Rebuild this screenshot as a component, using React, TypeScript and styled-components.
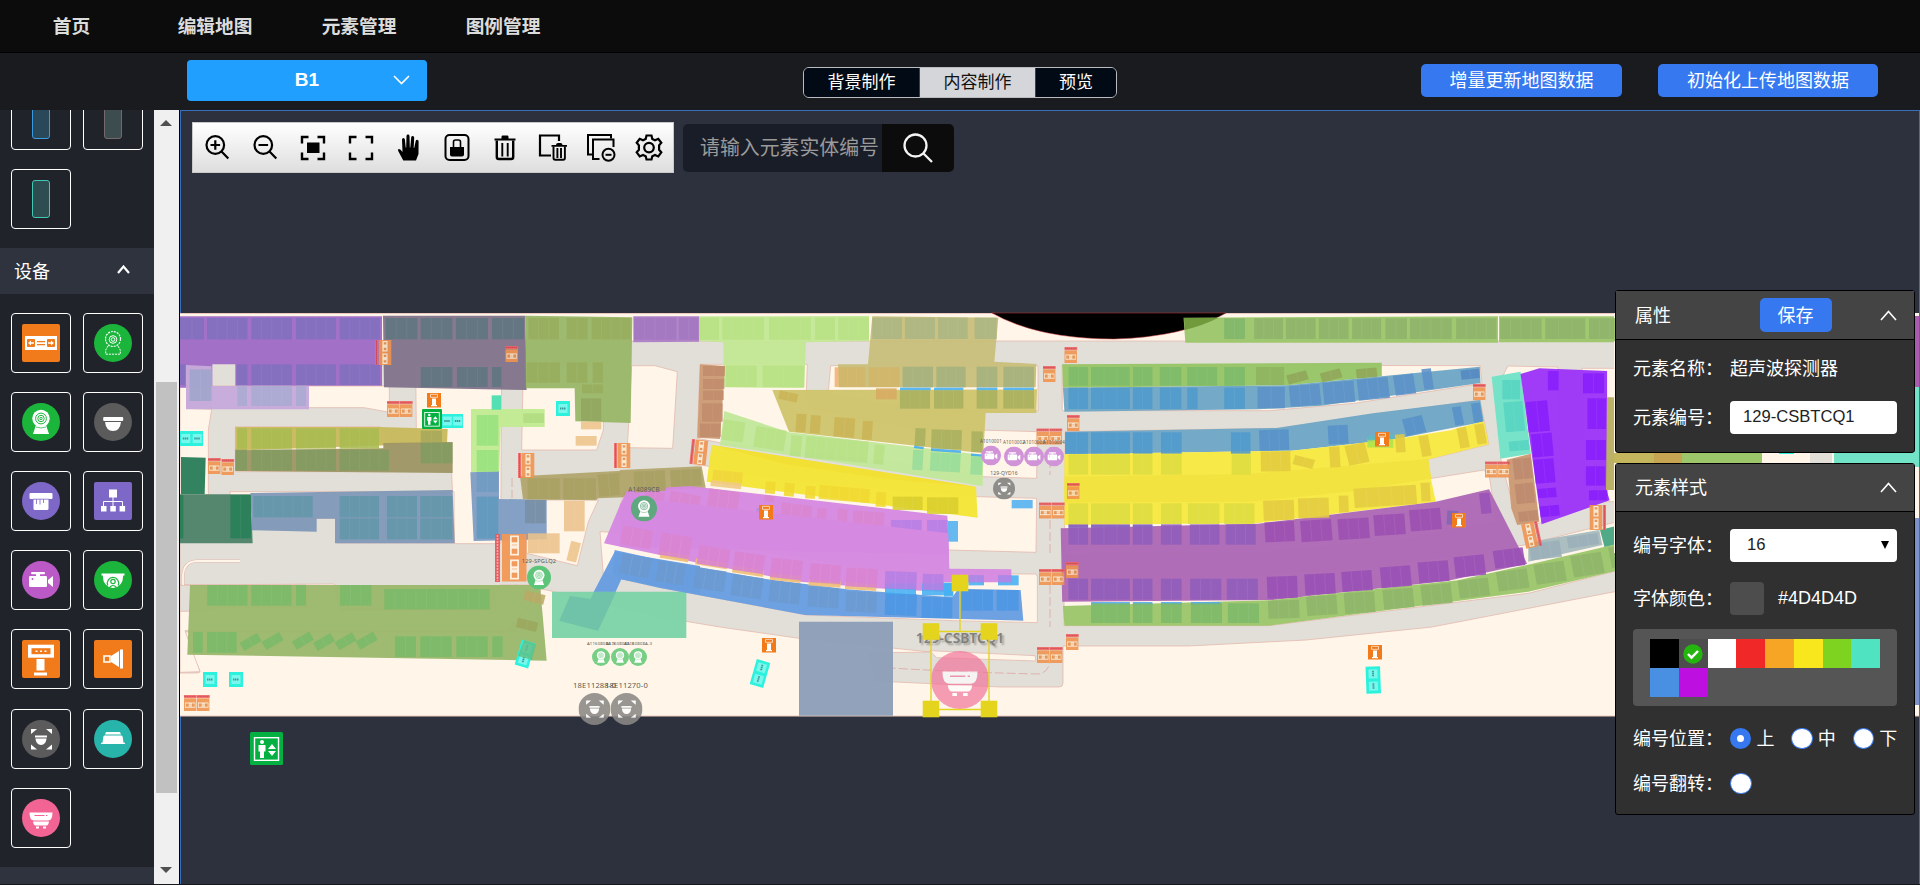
import React from 'react';
import styled, { createGlobalStyle } from 'styled-components';

const GlobalStyle = createGlobalStyle`
  * { box-sizing: border-box; }
  body {
    margin: 0;
    background: #17181c;
    overflow: hidden;
    font-family: "Liberation Sans", "Noto Sans CJK SC", sans-serif;
  }
  svg { display: block; }
`;

/* ---------- page frame ---------- */
const Page = styled.div`
  display: flex;
  flex-direction: column;
  width: 1920px;
  height: 885px;
  color: #fff;
`;
const TopNav = styled.nav`
  display: flex;
  height: 53px;
  flex: none;
  align-items: center;
  background: #0c0c0c;
  border-bottom: 1px solid #000;
`;
const NavItem = styled.a<{ $width: number }>`
  width: ${p => p.$width}px;
  padding-top: 1px;
  text-align: center;
  color: #dcdcdc;
  font-size: 18.7px;
  font-weight: 700;
  line-height: 52px;
`;
const SubBar = styled.header`
  display: flex;
  flex: none;
  height: 57px;
  background: #1a1b1f;
`;
const FloorSelect = styled.button`
  display: flex;
  align-items: center;
  justify-content: center;
  position: relative;
  width: 240px;
  height: 41px;
  margin: 7px 376px 0 187px;
  padding: 0 0 1px;
  border: 0;
  border-radius: 4px;
  background: #219fff;
  color: #fff;
  font: 700 19px "Liberation Sans", sans-serif;
  svg { position: absolute; right: 17px; top: 15px; }
`;
const Segments = styled.div`
  display: flex;
  width: 314px;
  height: 31px;
  margin-top: 14px;
  border: 1px solid #b9bbc0;
  border-radius: 6px;
  overflow: hidden;
`;
const Segment = styled.button<{ $active?: boolean; $width: number }>`
  width: ${p => p.$width}px;
  padding: 0 0 4px;
  border: 0;
  border-right: 1px solid #3b3f49;
  background: ${p => (p.$active ? '#d5d6da' : '#020a15')};
  color: ${p => (p.$active ? '#111' : '#fff')};
  font: 17px/25px "Noto Sans CJK SC", sans-serif;
  &:last-child { border-right: 0; }
`;
const Actions = styled.div`
  display: flex;
  gap: 36px;
  margin: 11px 0 0 304px;
`;
const PrimaryButton = styled.button<{ $width: number; $height: number }>`
  width: ${p => p.$width}px;
  height: ${p => p.$height}px;
  padding: 0 0 3px;
  border: 0;
  border-radius: 5px;
  background: #3678ef;
  color: #fff;
  font: 18px/1 "Noto Sans CJK SC", sans-serif;
`;
const Main = styled.main`
  display: flex;
  height: 774px;
  flex: none;
`;

/* ---------- sidebar ---------- */
const Sidebar = styled.aside`
  width: 154px;
  overflow: hidden;
  background: #20232a;
`;
const TileGrid = styled.div<{ $pull?: number }>`
  display: grid;
  grid-template-columns: 60px 60px;
  grid-auto-rows: 60px;
  gap: 19.1px 12px;
  margin-top: ${p => (p.$pull ? -p.$pull : 0)}px;
  padding: ${p => (p.$pull ? 0 : 19)}px 0 19px 11px;
`;
const Tile = styled.div`
  display: grid;
  place-items: center;
  border: 1px solid #fff;
  border-radius: 4px;
`;
const Bar = styled.div<{ $stroke: string; $fill: string }>`
  width: 18px;
  height: 38px;
  border: 1px solid ${p => p.$stroke};
  border-radius: 3px;
  background: ${p => p.$fill};
`;
const SectionHead = styled.div`
  display: flex;
  align-items: center;
  justify-content: space-between;
  height: 46px;
  padding: 0 24px 3px 14px;
  background: #2f333e;
  font-size: 18px;
`;
const ScrollTrack = styled.div`
  display: flex;
  flex-direction: column;
  align-items: center;
  width: 26px;
  padding: 10px 1px 7px 0;
  background: #f0f0f0;
  border-right: 1px solid #000;
`;
const ScrollThumb = styled.div`
  width: 21px;
  height: 411px;
  margin: 256px 0 74px;
  background: #c1c1c1;
`;
const Arrow = styled.div<{ $down?: boolean }>`
  border: 6px solid transparent;
  border-top-width: ${p => (p.$down ? 6 : 0)}px;
  border-bottom-width: ${p => (p.$down ? 0 : 6)}px;
  border-top-color: #505050;
  border-bottom-color: #505050;
`;

/* ---------- canvas ---------- */
const Canvas = styled.section`
  position: relative;
  flex: 1;
  border: 1px solid #3a6fbc;
  border-bottom: 0;
  background: #2c313d;
`;
const MapSvg = styled.svg`
  position: absolute;
  top: 0;
  left: -1px;
`;
const Tools = styled.div`
  position: relative;
  display: flex;
  gap: 9px;
  padding: 11px 0 0 11px;
`;
const Toolbar = styled.div`
  display: flex;
  align-items: center;
  width: 482px;
  height: 51px;
  border: 1px solid #c9c9c9;
  background: linear-gradient(#fff, #dedede);
`;
const ToolButton = styled.button`
  display: grid;
  place-items: center;
  width: 48px;
  height: 48px;
  padding: 0;
  border: 0;
  background: none;
  color: #000;
`;
const Search = styled.div`
  display: flex;
  width: 271px;
  height: 48px;
  margin-top: 2px;
  border-radius: 5px;
  overflow: hidden;
`;
const SearchInput = styled.input`
  width: 199px;
  padding: 0 0 3px 17px;
  border: 0;
  background: #191d27;
  font: 19.9px "Noto Sans CJK SC", sans-serif;
  &::placeholder { color: #9a9a9a; opacity: 1; }
`;
const SearchButton = styled.button`
  display: grid;
  place-items: center;
  width: 72px;
  padding: 0;
  border: 0;
  background: #0c0c0c;
`;

/* ---------- property panels ---------- */
const PanelColumn = styled.div`
  position: absolute;
  top: 179px;
  right: 4px;
  display: flex;
  flex-direction: column;
  gap: 10px;
  width: 300px;
`;
const Panel = styled.div<{ $height: number }>`
  height: ${p => p.$height}px;
  border: 1px solid #000;
  border-radius: 3px;
  background: #303030;
`;
const PanelHead = styled.div<{ $height: number }>`
  display: flex;
  align-items: center;
  justify-content: space-between;
  height: ${p => p.$height}px;
  padding: 0 17px 0 19px;
  border-bottom: 1px solid #000;
  background: #444;
  font-size: 18px;
  button { margin-left: 40px; }
`;
const PanelTitle = styled.span`
  padding-bottom: 3px;
`;
const Row = styled.div<{ $top: number; $height: number }>`
  display: flex;
  align-items: center;
  height: ${p => p.$height}px;
  margin: ${p => p.$top}px 0 0 17px;
  font-size: 18px;
  white-space: nowrap;
`;
const Label = styled.span`
  width: 97px;
  flex: none;
  padding-bottom: 3px;
`;
const Value = styled.span`
  padding-bottom: 3px;
`;
const Field = styled.div<{ $pad: number }>`
  display: flex;
  align-items: center;
  justify-content: space-between;
  width: 167px;
  height: 33px;
  padding: 0 8px 1px ${p => p.$pad}px;
  border-radius: 4px;
  background: #fff;
  color: #222;
  font-size: 16.6px;
`;
const Chip = styled.span`
  width: 34px;
  height: 33px;
  margin-right: 14px;
  border-radius: 4px;
  background: #4d4d4d;
`;
const Palette = styled.div`
  display: flex;
  flex-wrap: wrap;
  align-content: flex-start;
  width: 264px;
  height: 77px;
  margin: 14px 0 0 17px;
  padding: 10px 17px;
  border-radius: 4px;
  background: #555;
`;
const Swatch = styled.span<{ $color: string }>`
  display: grid;
  place-items: center;
  width: 28.75px;
  height: 29px;
  background: ${p => p.$color};
`;
const Radio = styled.span<{ $on?: boolean }>`
  width: 21.5px;
  height: 21.5px;
  border: ${p => (p.$on ? 7 : 1)}px solid #3678ef;
  border-radius: 50%;
  background: #fff;
`;
const RadioText = styled.span`
  width: 40px;
  padding: 0 0 3px 5px;
`;

/* ---------- device glyphs, drawn on a 38 x 38 field ---------- */
type Kind = 'gate' | 'camDash' | 'cam' | 'dome' | 'reader' | 'tree' | 'video' | 'dome2' | 'kiosk' | 'speaker' | 'scan' | 'lamp' | 'sonic';

const glyphColor: Record<Kind, string> = {
  gate: '#f17b1b', camDash: '#1bb53c', cam: '#1bb53c', dome: '#5b5b5b', reader: '#7d68c8', tree: '#7d68c8',
  video: '#bb59c6', dome2: '#1bb53c', kiosk: '#f17b1b', speaker: '#f17b1b', scan: '#5b5b5b', lamp: '#27b5ab', sonic: '#f26493',
};
const squareKinds: Kind[] = ['gate', 'tree', 'kiosk', 'speaker'];

function glyphShapes(kind: Kind, c: string) {
  switch (kind) {
    case 'gate':
      return <><path d="M3 12h32v14H3z" /><g fill={c}><rect x="5" y="15" width="8" height="8" rx="1" /><rect x="25" y="15" width="8" height="8" rx="1" /><path d="M15 17h8v1.2h-8zM15 20h8v1.2h-8z" /></g><path d="M6 19l3-2.6v1.8h3v1.6H9v1.8zM32 19l-3-2.6v1.8h-3v1.6h3v1.8z" /></>;
    case 'camDash':
      return <g fill="none" stroke="#fff"><circle cx="19" cy="15" r="7.5" strokeDasharray="2 1" strokeWidth="1.2" /><circle cx="19" cy="15.5" r="3.8" /><circle cx="19" cy="15.5" r="1.8" /><path d="M14 22l-2.3 4v4.2h14.6V26L24 22" strokeDasharray="2 1" /></g>;
    case 'cam':
      return <><path d="M14 22h10l3 9H11z" /><circle cx="19" cy="15.5" r="8.7" /><g fill="none" stroke={c}><circle cx="19" cy="15.5" r="5.4" /><circle cx="19" cy="15.5" r="3.2" /><circle cx="19" cy="15.5" r="1.2" /><path d="M14 24q5 2 10 0" strokeWidth=".7" /></g></>;
    case 'dome':
      return <><rect x="9.2" y="14" width="20" height="4" rx="1" /><path d="M11 19h16q-1 9-8 9t-8-9z" /></>;
    case 'reader':
      return <><rect x="7.5" y="11" width="23" height="6" rx="1" /><path d="M11.500 17h15v9.500q0 1.500-1.500 1.500H13q-1.500 0-1.500-1.500z" /><path d="M11 17.200h16M14.500 17v5M18 17v5.500M21.500 17v4" stroke={c} strokeWidth=".8" /></>;
    case 'tree':
      return <><rect x="15" y="7.500" width="8" height="8" /><path d="M19 15v9M9.500 24v-4.500h19V24" fill="none" stroke="#fff" /><path d="M7 24h5.500v5.500H7zM16.300 24h5.500v5.500h-5.500zM25.600 24h5.500v5.500h-5.500z" /></>;
    case 'video':
      return <><rect x="9" y="11" width="14" height="2.300" rx="1" /><path d="M14 13h4v2h-4z" /><rect x="7" y="15" width="18" height="11" rx="1.300" /><path d="M26 19l5-4v11l-5-4z" /><circle cx="10.500" cy="18" r="1" fill={c} /></>;
    case 'dome2':
      return <><path d="M7.500 12.500h23v2h-1.300q-.2 11.500-10.200 12.500-10-1-10.200-12.500H7.500z" /><g fill="none" stroke={c} strokeWidth="1.200"><circle cx="19" cy="20.500" r="2.200" /><path d="M13.800 24.500a5.700 5.700 0 1 1 10.400 0M15.500 26.500q3.500-4 7 0" /></g></>;
    case 'kiosk':
      return <><path d="M6 4.700h26v13H6z" /><path d="M9.500 8.200h19v6h-19z" fill={c} /><path d="M13.500 10.500h2v1.500h-2zM18 10.500h2v1.500h-2zM22.500 10.500h2v1.500h-2zM14.500 19h8v11.500h-8zM12 32.500h13v3H12z" /></>;
    case 'speaker':
      return <><path d="M26 9.500h3v19h-3zM25 11v16l-8-5v-6z" /><path d="M10 16h6v6h-6z" fill="none" stroke="#fff" strokeWidth="1.600" /></>;
    case 'scan':
      return <><path d="M9 9h6l-6 5zM30 9h-6l6 5zM9 29.500h6l-6-5zM30 29.500h-6l6-5z" /><rect x="13" y="15.500" width="12" height="2" /><path d="M13.500 18.500h11q-.5 6.500-5.500 6.500t-5.500-6.500z" /></>;
    case 'lamp':
      return <><path d="M12 12h14l1 2.600H11zM10.500 15.500h17q1 0 1.200 1.500l.8 5.800H31V24H7v-1.200h1.500l.8-5.800q.2-1.500 1.200-1.500z" /></>;
    case 'sonic':
      return <><path d="M7.500 13.500h23q0 8-4.500 8H12q-4.500 0-4.500-8z" /><path d="M11 22.500h16q-.5 4-2.500 4H13.500q-2 0-2.500-4z" /><path d="M14 27.500h3v2h-3zM21 27.500h3v2h-3z" /><path d="M12.500 16.500h10M24 16.500h1.500" stroke={c} /></>;
  }
}

function Glyph({ kind, x = 0, y = 0, size = 38, color, opacity }: { kind: Kind; x?: number; y?: number; size?: number; color?: string; opacity?: number }) {
  const c = color ?? glyphColor[kind];
  return (
    <svg x={x} y={y} width={size} height={size} viewBox="0 0 38 38" fill="#fff" opacity={opacity}>
      {squareKinds.includes(kind) ? <rect width="38" height="38" rx="2" fill={c} /> : <circle cx="19" cy="19" r="19" fill={c} />}
      {glyphShapes(kind, c)}
    </svg>
  );
}

/* ---------- map data ---------- */
type Zone = [string, string];
type BayRow = [string, number, number, [number, number][]];
type TiltBay = [string, number, number, number, number, number];
interface Sector {
  transform: string;
  islands: string[];
  zones: Zone[];
  rows: BayRow[];
  tilted: TiltBay[];
}

const west: Sector = {
  transform: 'translate(180 305) scale(.33333)',
  islands: [
    '97,243 628,243 628,322 553,308 95,308', '0,182 20,182 20,310 95,313 85,375 85,570 0,570',
    '707,182 965,182 962,716 824,716 815,505 812,480 718,478 710,470', '166,365 600,365 628,410 628,500 166,500',
    '150,560 822,560 822,714 470,714 470,640 150,640', '1030,182 1272,182 1270,375 1250,435 1025,435',
    '1040,585 1255,585 1225,650 1192,782 1040,745',
  ],
  zones: [
    ['#a06cc6', '0,34 606,34 606,242 166,242 166,178 97,178 97,248 0,248'],
    ['#c6a9da', '18,180 95,184 95,243 387,243 387,313 18,313'],
    ['#83758c', '609,32 1036,32 1040,255 612,247'],
    ['#9bb86a', '1036,32 1357,37 1352,354 1186,349 1184,250 1038,250'],
    ['#c8ba5e', '166,366 600,366 803,372 801,415 166,436'],
    ['#9f9766', '166,436 610,430 610,414 818,411 818,504 166,498'],
    ['#c2ea92', '873,312 1094,312 1094,366 962,366 958,502 873,502'],
    ['#2c7f5b', '3,456 77,458 74,568 3,568'],
    ['#51846b', '0,568 212,568 218,715 0,715'],
    ['#8199b8', '211,564 818,555 824,715 465,715 465,641 410,641 410,680 216,676'],
    ['#829ec4', '871,502 957,499 957,582 1100,584 1100,703 881,708'],
    ['#b3a770', '1020,514 1380,494 1380,575 1254,580 1248,586 1029,583'],
  ],
  rows: [
    ['#806fbd', 39, 64, [[0, 72], [81, 121], [214, 122], [348, 120], [479, 121]]],
    ['#806fbd', 178, 62, [[0, 15], [170, 32], [214, 122], [348, 120], [479, 121]]],
    ['#9fa5cc', 193, 95, [[29, 65]]],
    ['#a9abd1', 242, 61, [[172, 29], [214, 122], [348, 30]]],
    ['#60757f', 39, 64, [[617, 95], [722, 95], [828, 96], [936, 96]]],
    ['#60757f', 186, 60, [[722, 95], [831, 92], [936, 28]]],
    ['#98ad5e', 39, 64, [[1045, 92], [1160, 63], [1235, 117]]],
    ['#98ad5e', 172, 61, [[1040, 100], [1160, 62], [1238, 31]]],
    ['#98ad5e', 238, 27, [[1206, 63]]],
    ['#92a660', 280, 68, [[1203, 61]]],
    ['#eec48a', 350, 23, [[1203, 61]]],
    ['#eec48a', 393, 29, [[1187, 63]]],
    ['#a7bb50', 370, 61, [[172, 29], [214, 122], [348, 120], [479, 118]]],
    ['#819b60', 434, 63, [[166, 35], [214, 122], [348, 120], [479, 148]]],
    ['#a7a85a', 377, 34, [[722, 64]]],
    ['#819b60', 413, 62, [[722, 95]]],
    ['#98e180', 330, 92, [[890, 65]]],
    ['#98e180', 435, 65, [[890, 65]]],
    ['#6f9bc0', 502, 59, [[890, 65]]],
    ['#5f99bd', 575, 126, [[890, 65]]],
    ['#7990a5', 585, 70, [[1035, 62]]],
    ['#3eddac', 271, 43, [[935, 28]]],
    ['#b0dc82', 325, 29, [[1030, 62]]],
    ['#277f58', 570, 130, [[151, 62], [0, 10]]],
    ['#6296a9', 573, 64, [[220, 178], [479, 118], [621, 90], [721, 96]]],
    ['#6296a9', 640, 63, [[479, 118], [621, 90], [721, 96]]],
    ['#a89f63', 520, 63, [[1043, 96], [1150, 98]]],
    ['#ecc38b', 587, 92, [[1152, 62]]],
    ['#ecc38b', 685, 60, [[1044, 95]]],
  ],
  tilted: [['#a89f63', 1255, 505, 96, 66, -5], ['#eec48a', 1166, 710, 30, 60, 14]],
};

const south: Sector = {
  transform: 'translate(180 540) scale(.33333)',
  islands: ['0,135 460,132 466,135 482,210 930,210 960,135 1085,135 1080,160 990,262 975,272 15,272 60,395 0,397 0,214 82,213 98,203 380,203 380,135 0,135'],
  zones: [
    ['#9cb86c', '30,135 1080,135 1100,362 22,344'],
    ['#689ddf', '1304,35 1560,78 1560,163 1324,118 1254,272 1138,242 1170,168 1230,177'],
    ['#7ed3a8', '1116,155 1519,155 1519,294 1116,294'],
    ['#6fc1a8', '1170,168 1232,177 1242,156 1308,156 1254,272 1138,242'],
  ],
  rows: [
    ['#7ab968', 135, 62, [[82, 120], [214, 120], [348, 30], [480, 94]]],
    ['#7ab968', 147, 61, [[613, 316]]],
    ['#7ab968', 276, 62, [[39, 29], [81, 89]]],
    ['#7ab968', 289, 62, [[645, 63], [721, 94], [829, 94], [937, 31]]],
  ],
  tilted: [
    ['#7ab968', 182, 292, 60, 28, -30], ['#7ab968', 248, 289, 60, 28, -30], ['#7ab968', 339, 288, 60, 28, -30], ['#7ab968', 402, 292, 60, 28, -30],
    ['#7ab968', 467, 290, 60, 28, -30], ['#7ab968', 530, 288, 60, 28, -30], ['#9ba75c', 1010, 240, 62, 29, 14], ['#b9aa66', 1032, 158, 62, 29, 14],
  ],
};

const centre: Sector = {
  transform: 'translate(620 305) scale(.33333)',
  islands: [
    '35,182 105,182 172,200 158,430 22,428',
    '240,178 562,178 558,285 575,308 720,340 900,370 1252,380 1250,520 1090,515 800,470 310,415 232,400',
    '632,182 1254,182 1254,318 900,315 640,270 625,260',
    '245,480 480,525 1070,575 1250,580 1248,742 985,735 780,720 0,600 20,545',
  ],
  zones: [
    ['#ad80c6', '40,34 237,34 237,110 40,112'],
    ['#c4e896', '237,34 747,33 747,108 558,112 552,249 313,247 309,112 237,108'],
    ['#c9bf7c', '757,34 1135,38 1123,170 1249,177 1247,247 656,247 654,178 744,178'],
    ['#cfc46c', '457,255 1251,253 1249,324 1097,324 1090,445 507,380'],
    ['#cb9b75', '240,178 315,183 300,402 232,398'],
    ['#c1e79b', '313,318 507,382 1090,450 1088,544 640,470 300,420'],
    ['#b4a870', '0,495 245,484 257,548 20,560 0,573'],
    ['#f5e537', '275,420 1068,545 1073,638 260,530'],
    ['#f2df34', '275,420 1068,545 800,522 500,478'],
    ['#d689e0', '0,600 20,558 200,542 982,632 987,750 0,726'],
  ],
  rows: [
    ['#a278c0', 38, 66, [[42, 127], [177, 58]]],
    ['#b8e083', 38, 66, [[237, 60], [307, 125], [447, 125], [585, 60], [655, 92]]],
    ['#b8e083', 182, 64, [[318, 92], [428, 125]]],
    ['#abb583', 38, 64, [[757, 89], [855, 90], [954, 89], [1064, 66]]],
    ['#f1b071', 187, 59, [[644, 12]]],
    ['#d2b568', 187, 59, [[656, 80], [746, 92]]],
    ['#a4b17d', 185, 62, [[848, 91], [949, 88], [1070, 62], [1150, 92]]],
    ['#45aff3', 248, 8, [[840, 92], [942, 88], [1070, 62], [1150, 92]]],
    ['#a9b160', 256, 55, [[840, 90], [942, 88], [1070, 62], [1150, 92]]],
    ['#d8ab62', 250, 33, [[768, 62]]],
    ['#c28c6c', 183, 30, [[249, 65]]], ['#c28c6c', 222, 30, [[249, 64]]], ['#c28c6c', 257, 28, [[249, 62]]],
    ['#c28c6c', 295, 55, [[246, 62]]], ['#c28c6c', 356, 40, [[240, 62]]],
    ['#dace2f', 575, 40, [[818, 90]]],
    ['#dace2f', 577, 50, [[921, 94]]],
    ['#50aff0', 648, 62, [[984, 30]]],
    ['#b880e4', 645, 62, [[813, 92], [921, 62]]],
    ['#50aff0', 585, 25, [[1175, 63]]],
  ],
  tilted: [
    ['#cab557', 477, 262, 56, 25, 12], ['#cab557', 528, 327, 30, 54, 4], ['#cab557', 571, 331, 30, 54, 4], ['#cab557', 642, 338, 62, 58, 4], ['#cab557', 727, 348, 30, 56, 4],
    ['#a9b160', 885, 370, 31, 54, 3], ['#a9b160', 934, 374, 91, 58, 2], ['#a9b160', 1054, 379, 34, 62, 1],
    ['#41aaf0', 882, 424, 29, 7, 8], ['#41aaf0', 933, 433, 90, 8, 4], ['#41aaf0', 1053, 447, 36, 7, 4],
    ['#b7e086', 308, 348, 64, 60, 8], ['#b7e086', 404, 370, 92, 62, 9], ['#b7e086', 512, 392, 32, 62, 5], ['#b7e086', 556, 402, 188, 64, 5], ['#b7e086', 762, 420, 30, 58, 5],
    ['#98dc9b', 878, 435, 31, 60, 3], ['#98dc9b', 931, 444, 90, 56, 3], ['#98dc9b', 1052, 455, 35, 54, 3],
    ['#a89f63', 42, 498, 94, 62, -3], ['#a89f63', 152, 494, 92, 50, -3],
    ['#f0d63a', 278, 498, 90, 32, 6], ['#efc883', 272, 530, 92, 18, 6],
    ['#f0da32', 436, 530, 30, 36, 5], ['#f0da32', 493, 534, 30, 40, 5], ['#f0da32', 556, 543, 30, 38, 4], ['#f0da32', 597, 546, 152, 42, 5], ['#f0da32', 768, 561, 30, 44, 3],
    ['#da86d0', 75, 560, 58, 34, 8], ['#da86d0', 146, 565, 92, 64, 10], ['#da86d0', 263, 556, 92, 72, 8], ['#da86d0', 434, 572, 28, 18, 8], ['#da86d0', 482, 598, 92, 64, 7],
    ['#da86d0', 590, 610, 28, 58, 6], ['#da86d0', 651, 612, 30, 60, 6], ['#da86d0', 698, 620, 94, 60, 4], ['#b58bd9', 407, 612, 44, 36, 8],
  ],
};

const southCentre: Sector = {
  transform: 'translate(660 500) scale(.33333)',
  islands: ['-180,95 0,105 660,210 870,222 1128,222 1132,230 1132,368 880,362 440,345 0,262 -170,225', '810,452 1125,467 1128,483 830,473'],
  zones: [
    ['#d689e0', '-168,130 -120,15 -100,-10 865,100 868,206 1054,208 1054,247 852,247 852,276 650,265 420,245 120,190 0,165'],
    ['#689ee0', '-136,150 0,180 300,235 560,268 877,292 895,266 1082,270 1090,362 435,345 0,264 -116,238 -140,222'],
    ['#8e9fb8', '417,365 699,365 699,647 417,647'],
  ],
  rows: [
    ['#45aff3', 250, 36, [[675, 93], [786, 93]]],
    ['#45aff3', 248, 42, [[852, 28]]],
    ['#45aff3', 226, 30, [[925, 47], [1014, 62]]],
    ['#ba83e5', 225, 22, [[925, 47], [1014, 40]]],
    ['#4c96e2', 270, 62, [[905, 94], [1010, 66]]],
  ],
  tilted: [
    ['#edbd74', 0, 160, 86, 20, 9], ['#edbd74', 106, 182, 96, 18, 9], ['#edbd74', 217, 204, 94, 20, 9], ['#edbd74', 330, 224, 92, 20, 6], ['#edbd74', 446, 241, 96, 19, 4], ['#edbd74', 555, 250, 94, 20, 4],
    ['#da84d0', -115, 85, 90, 55, 10], ['#da84d0', 0, 105, 92, 66, 9], ['#da84d0', 114, 142, 94, 56, 9], ['#da84d0', 221, 160, 92, 56, 8], ['#da84d0', 332, 178, 94, 58, 6], ['#da84d0', 450, 193, 92, 56, 4], ['#da84d0', 558, 205, 94, 56, 3],
    ['#b67fe4', 675, 215, 95, 52, 2], ['#b67fe4', 788, 222, 62, 48, 1],
    ['#6b9acf', -118, 168, 90, 60, 11], ['#6b9acf', -10, 188, 84, 62, 9], ['#6b9acf', 102, 208, 94, 62, 8], ['#6b9acf', 215, 228, 92, 64, 8], ['#6b9acf', 328, 246, 92, 63, 6], ['#6b9acf', 444, 262, 92, 60, 4], ['#6b9acf', 558, 276, 92, 60, 3],
    ['#4c96e2', 675, 282, 95, 64, 2], ['#4c96e2', 785, 292, 92, 62, 1],
  ],
};

const east: Sector = {
  transform: 'translate(1040 305) scale(.3699 .33333)',
  islands: [
    '60,180 1190,182 1195,235 850,295 620,317 60,317', '68,380 640,370 1190,285 1213,418 1060,460 780,502 620,515 68,515',
    '68,592 580,590 830,560 1060,520 1200,495 1215,515 1233,650 1000,700 600,742 65,748',
    '65,815 560,813 950,780 1310,720 1568,648 1568,795 1320,865 620,962 65,962',
    '1265,183 1400,186 1408,600 1350,655 1290,650 1245,460 1250,215', '1465,190 1560,190 1560,590 1480,590',
  ],
  zones: [
    ['#9dc66b', '388,38 1238,34 1238,113 393,113'],
    ['#9dc66b', '1241,34 1568,34 1568,112 1241,112'],
    ['#98c567', '60,178 924,173 924,214 670,241 62,248'],
    ['#6fa7c6', '62,248 670,241 924,214 1189,185 1191,234 760,302 590,313 66,320'],
    ['#6fa7c6', '68,380 640,369 900,325 1190,285 1200,350 950,404 680,437 68,448'],
    ['#f7e842', '66,448 680,437 950,404 1110,376 1200,348 1213,418 1046,464 1070,590 590,654 66,660'],
    ['#f2e240', '66,515 560,507 800,485 1050,462 1058,520 830,560 560,590 66,592'],
    ['#ad69b6', '56,670 590,656 1070,590 1214,553 1317,776 1100,828 630,885 60,890'],
    ['#9dc66b', '62,903 620,886 1130,826 1317,780 1568,715 1568,795 1320,860 620,962 66,962'],
    ['#73e3c7', '1221,215 1299,200 1327,446 1245,461'],
    ['#9d36f8', '1299,207 1350,190 1533,198 1533,560 1540,586 1356,658'],
    ['#cb9a76', '1262,464 1327,446 1350,650 1290,660 1274,610'],
    ['#bab062', '1533,277 1568,277 1568,555 1530,555'],
    ['#a9bcbd', '1320,712 1512,675 1520,720 1320,770'],
    ['#4ba783', '1514,675 1568,660 1568,715 1526,726'],
  ],
  rows: [
    ['#7fb56a', 40, 62, [[498, 56]]],
    ['#8eb36a', 40, 62, [[579, 78], [665, 80], [754, 80], [844, 78], [934, 58], [1000, 113], [1125, 109], [1244, 112], [1366, 108], [1484, 84]]],
    ['#7cbb69', 186, 56, [[77, 53], [138, 105], [251, 53], [324, 58], [398, 81], [498, 56]]],
    ['#8fb460', 186, 54, [[584, 76]]],
    ['#4e9acb', 248, 64, [[77, 53], [138, 105], [251, 53], [324, 58], [398, 28], [498, 56]]],
    ['#5b91c7', 246, 64, [[588, 74]]],
    ['#4e9acb', 382, 64, [[68, 62], [138, 105], [251, 53], [327, 56], [516, 53]]],
    ['#dddc40', 448, 61, [[77, 53], [138, 105], [251, 53], [327, 56], [518, 52]]],
    ['#dddc40', 595, 62, [[77, 53], [138, 105], [251, 53], [327, 56], [400, 85], [498, 82]]],
    ['#4eaaf0', 660, 7, [[77, 53], [138, 105], [251, 53]]],
    ['#905db9', 658, 61, [[77, 53], [138, 105], [251, 53], [327, 56], [405, 80], [502, 81]]],
    ['#905db9', 821, 63, [[77, 53], [138, 105], [251, 53], [327, 56], [406, 84], [505, 84]]],
    ['#4eaaf0', 891, 9, [[138, 105], [251, 53], [327, 56], [408, 80]]],
    ['#7dba69', 895, 59, [[138, 105], [251, 53], [327, 56], [408, 84], [508, 84]]],
    ['#56d4c1', 225, 58, [[1250, 48]]],
    ['#871ffb', 205, 60, [[1468, 57]]], ['#871ffb', 280, 92, [[1480, 50]]], ['#871ffb', 405, 60, [[1476, 54]]], ['#871ffb', 484, 58, [[1476, 52]]], ['#871ffb', 556, 30, [[1484, 50]]],
    ['#871ffb', 198, 58, [[1373, 29]]],
  ],
  tilted: [
    ['#90a65a', 668, 203, 56, 28, -16], ['#90a65a', 759, 197, 56, 28, -16], ['#90a65a', 855, 190, 56, 28, -6],
    ['#5b91c7', 675, 240, 83, 62, -5], ['#5b91c7', 766, 230, 84, 64, -5], ['#5b91c7', 859, 220, 84, 63, -6], ['#5b91c7', 958, 209, 55, 60, -8], ['#5b91c7', 1035, 191, 26, 62, -8], ['#5489c2', 1138, 194, 50, 28, -6],
    ['#5791c7', 593, 374, 80, 62, -2], ['#5791c7', 779, 361, 54, 56, -3], ['#5791c7', 984, 336, 55, 52, -14], ['#5791c7', 1118, 305, 24, 55, -10], ['#5791c7', 1169, 294, 24, 58, -8],
    ['#e2cb3d', 597, 439, 80, 60, -1], ['#e2cb3d', 685, 457, 56, 28, 16], ['#e2cb3d', 783, 425, 28, 62, -3], ['#e2cb3d', 829, 417, 56, 60, -13], ['#e2cb3d', 961, 388, 26, 54, -4], ['#e2cb3d', 1028, 392, 26, 62, -10], ['#e2cb3d', 1131, 367, 26, 62, -10], ['#e2cb3d', 1178, 357, 26, 60, -9],
    ['#e4cc40', 604, 586, 83, 60, -2], ['#e4cc40', 698, 579, 83, 60, -2], ['#e4cc40', 808, 572, 26, 50, -2], ['#e4cc40', 849, 545, 169, 58, -4], ['#e4cc40', 1030, 533, 25, 56, -3],
    ['#9b50b0', 608, 650, 80, 60, -3], ['#9b50b0', 705, 645, 84, 64, -4], ['#9b50b0', 806, 640, 84, 62, -4], ['#9b50b0', 903, 628, 84, 62, -4], ['#9b50b0', 1000, 612, 84, 64, -5], ['#9853b6', 1190, 564, 28, 62, -6], ['#8165b3', 1100, 617, 30, 42, 3],
    ['#9850b5', 614, 814, 82, 66, -2], ['#9850b5', 716, 806, 82, 62, -3], ['#9850b5', 816, 798, 82, 60, -4], ['#9850b5', 921, 784, 82, 62, -5], ['#9850b5', 1023, 769, 82, 62, -5], ['#9850b5', 1121, 752, 82, 62, -6], ['#9850b5', 1227, 732, 82, 54, -8],
    ['#8eb46a', 617, 886, 84, 54, -2], ['#8eb46a', 721, 872, 82, 58, -4], ['#8eb46a', 823, 862, 82, 62, -4], ['#8eb46a', 928, 852, 82, 58, -5], ['#8eb46a', 1031, 838, 82, 60, -6], ['#8eb46a', 1132, 822, 82, 54, -7], ['#8eb46a', 1236, 796, 84, 58, -8], ['#8eb46a', 1338, 773, 82, 60, -9], ['#8eb46a', 1438, 747, 84, 64, -10], ['#8eb46a', 1541, 724, 40, 62, -10],
    ['#56d4c1', 1256, 290, 52, 90, -5], ['#56d4c1', 1268, 407, 54, 30, -6],
    ['#871ffb', 1317, 288, 58, 92, -5], ['#871ffb', 1330, 385, 56, 70, -5], ['#871ffb', 1337, 462, 54, 72, -5], ['#871ffb', 1346, 550, 50, 28, -5], ['#871ffb', 1352, 602, 52, 32, -6],
    ['#bd8a6e', 1280, 460, 50, 62, -6], ['#bd8a6e', 1286, 535, 50, 60, -6], ['#bd8a6e', 1294, 618, 52, 30, -6],
    ['#9aafba', 1324, 711, 84, 50, -8], ['#9aafba', 1426, 690, 84, 34, -9],
    ['#aee34c', 885, 402, 70, 26, 1], ['#5fb9c2', 885, 390, 70, 14, -4],
  ],
};

function Slots({ color, x, y, w, h }: { color: string; x: number; y: number; w: number; h: number }) {
  const count = Math.max(1, Math.round(w / 31));
  return (
    <>
      <rect x={x} y={y} width={w} height={h} fill={color} fillOpacity=".88" />
      {Array.from({ length: count - 1 }, (_, i) => (
        <path key={i} d={`M${x + ((i + 1) * w) / count} ${y + 1}v${h - 2}`} stroke="#fff" strokeOpacity=".12" strokeWidth="1.5" />
      ))}
    </>
  );
}

function SectorBase({ s }: { s: Sector }) {
  return (
    <g transform={s.transform}>
      {s.islands.map((p, i) => (
        <polygon key={i} points={p} fill="#fff6e9" stroke="#e3b9ae" vectorEffect="non-scaling-stroke" strokeWidth=".8" strokeLinejoin="round" />
      ))}
    </g>
  );
}
function SectorZones({ s }: { s: Sector }) {
  return (
    <g transform={s.transform}>
      {s.zones.map(([c, p], i) => <polygon key={i} points={p} fill={c} fillOpacity=".97" />)}
      {s.rows.map(([c, y, h, cells], i) => cells.map(([x, w]) => <Slots key={`${i}-${x}`} color={c} x={x} y={y} w={w} h={h} />))}
      {s.tilted.map(([c, x, y, w, h, a], i) => (
        <g key={i} transform={`rotate(${a} ${x + w / 2} ${y + h / 2})`}><Slots color={c} x={x} y={y} w={w} h={h} /></g>
      ))}
    </g>
  );
}

/* ---------- map markers ---------- */
const gates: [number, number][] = [
  [387, 401], [400, 401], [208, 458], [221.500, 459], [505.500, 346], [1043, 366], [1064.500, 347], [1067, 415], [1036.500, 428.500], [1049.500, 428.500],
  [1067, 483], [1039, 502.500], [1052, 502.500], [1039, 569], [1052, 569], [1066, 562], [1066, 634], [1037, 647], [1050, 647], [1473, 384], [1485, 461.500], [1497.500, 461.500], [184, 695], [197, 695],
];
const sideGates: [number, number, number, number][] = [
  [518, 453, 1, 0], [614, 443, 1, 0], [375, 340, 1, 0], [692, 439, 1, 6], [1537, 521, -1, -12], [1606, 505, -1, 0],
];
const kiosks: [number, number][] = [[427, 393], [759, 505], [762, 638], [1375, 432], [1452, 513], [1368, 645]];
const spots: [number, number, number, number, number][] = [
  [442, 414, 21, 14, 0], [556, 401, 14, 15, 0], [180, 431, 23, 15, 0], [203, 672, 14, 15, 0], [229, 672, 14, 15, 0],
  [518, 641, 14, 26, 16], [753, 660.500, 14, 26, 16], [1366, 666.500, 14.500, 27, -2],
];

function Gate({ x, y }: { x: number; y: number }) {
  return (
    <g transform={`translate(${x} ${y})`} opacity=".9">
      <rect width="12.700" height="3" fill="#ef6868" />
      <path d="M.5 1.400h11.600" stroke="#cf3c45" strokeWidth="1" strokeDasharray="1.400 .5" />
      <rect y="3.300" width="12.400" height="12.700" fill="#f09450" />
      <rect x="1" y="7.500" width="10.400" height="5.200" fill="#fbe9d2" />
      <path d="M2 8.700h2.500v2.800H2zM8 8.700h2.500v2.800H8zM5.200 9.300h2M5.200 11h2" fill="#e5924f" stroke="#e5924f" strokeWidth=".5" />
    </g>
  );
}
function SideGate({ x, y, flip, angle }: { x: number; y: number; flip: number; angle: number }) {
  return (
    <g transform={`translate(${x} ${y}) rotate(${angle}) scale(${flip} 1)`} opacity=".9">
      <rect width="3.200" height="25" fill="#ef6868" />
      <path d="M1.500 .5v24" stroke="#cf3c45" strokeDasharray="1.400 .5" />
      <rect x="3.800" width="12.500" height="25" fill="#f09450" />
      <path d="M7.500 1h5v10.500h-5zM7.500 13.500h5V24h-5z" fill="#fbe9d2" />
      <path d="M8.700 2.200h2.600v2.400H8.700zM8.700 7.800h2.600v2.400H8.700zM8.700 14.700h2.600v2.400H8.700zM8.700 20.200h2.600v2.400H8.700z" fill="#e5924f" />
    </g>
  );
}
function Kiosk({ x, y }: { x: number; y: number }) {
  return (
    <g transform={`translate(${x} ${y})`}>
      <rect width="14" height="14.500" fill="#f17b1b" />
      <path d="M3.500 1.300h7v3h-7z" fill="none" stroke="#f8dfc8" strokeWidth=".9" />
      <path d="M5 5.500h4V12h1v1.300H4V12h1z" fill="#fff" />
    </g>
  );
}
function Spot({ x, y, w, h, a }: { x: number; y: number; w: number; h: number; a: number }) {
  const across = w > h * 1.3;
  const down = h > w * 1.3;
  const cells = across ? [[x + w * 0.25, y + h / 2], [x + w * 0.75, y + h / 2]] : down ? [[x + w / 2, y + h * 0.27], [x + w / 2, y + h * 0.73]] : [[x + w / 2, y + h / 2]];
  return (
    <g transform={`rotate(${a} ${x + w / 2} ${y + h / 2})`}>
      <rect x={x} y={y} width={w} height={h} fill="#2cf2dd" />
      {cells.map(([cx, cy], i) => (
        <g key={i}><rect x={cx - 4.500} y={cy - 4.500} width="9" height="9" fill="#78f7ec" /><path d={down ? `M${cx} ${cy - 3}v6` : `M${cx - 3} ${cy}h6`} stroke="#3b9a9a" strokeWidth="1.800" strokeDasharray="1.500 .5" /></g>
      ))}
    </g>
  );
}
function Elevator({ x, y, size }: { x: number; y: number; size: number }) {
  return (
    <svg x={x} y={y} width={size} height={size} viewBox="0 0 33 33">
      <rect width="33" height="33" rx="1.500" fill="#03b041" />
      <rect x="4.500" y="5.700" width="24" height="22.600" fill="none" stroke="#fff" strokeWidth="1.400" />
      <circle cx="12" cy="10" r="2" fill="#fff" />
      <path d="M8.500 13h7v6.500h-1.500V26h-4v-6.500H8.500zM18 17l4-5 4 5zM18 19h8l-4 5z" fill="#fff" />
    </svg>
  );
}

const deviceMarks: { kind: Kind; cx: number; cy: number; r: number; color: string; label: string; ly: number; fs: number }[] = [
  { kind: 'cam', cx: 539, cy: 577.500, r: 12, color: '#5dc579', label: '129-SPGLQ2', ly: 563, fs: 5.700 },
  { kind: 'cam', cx: 644, cy: 508.500, r: 13, color: '#5ea77f', label: 'A14089CB', ly: 491.500, fs: 6.300 },
  { kind: 'video', cx: 991, cy: 455.500, r: 10, color: '#d193d8', label: 'A1010001', ly: 443, fs: 4.500 },
  { kind: 'video', cx: 1014, cy: 456.500, r: 10, color: '#d193d8', label: 'A1010002', ly: 444, fs: 4.500 },
  { kind: 'video', cx: 1034, cy: 456.500, r: 10, color: '#d193d8', label: 'A1010003', ly: 444, fs: 4.500 },
  { kind: 'video', cx: 1054, cy: 456.500, r: 10, color: '#d193d8', label: 'A1010004', ly: 444, fs: 4.500 },
  { kind: 'scan', cx: 1004, cy: 488.500, r: 11, color: '#8e8d8a', label: '129-QYD16', ly: 474.500, fs: 5 },
  { kind: 'cam', cx: 601, cy: 657, r: 9, color: '#76cf85', label: 'A1160808A-3', ly: 645, fs: 4.300 },
  { kind: 'cam', cx: 620, cy: 657, r: 9, color: '#76cf85', label: 'A1160808A-3', ly: 645, fs: 4.300 },
  { kind: 'cam', cx: 638, cy: 657, r: 9, color: '#76cf85', label: 'A1160808A-3', ly: 645, fs: 4.300 },
  { kind: 'scan', cx: 594.500, cy: 709, r: 16, color: '#8b8986', label: '18E11288-0', ly: 687.500, fs: 7.600 },
  { kind: 'scan', cx: 626.500, cy: 709, r: 16, color: '#8b8986', label: '18E11270-0', ly: 687.500, fs: 7.600 },
];

const handles: [number, number][] = [[960, 583], [931, 631.500], [989, 631.500], [931, 709], [989, 709]];

function FloorMap() {
  const sectors = [west, south, centre, southCentre, east];
  return (
    <MapSvg width="1739" height="773" viewBox="180 111 1739 773">
      <rect x="180" y="313" width="1739" height="403" fill="#fff6e9" />
      <path
        d="M180 341H1919V545L1750 590 1613 592 1432 627 1306 640 1188 646H1063V683Q1063 687 1059 687H1000L875 681 868 653 930 652 797 638 720 627 660 617 547 590 515 585V632H182L200 671Q200 673 197 673H180z"
        fill="#e2dfd8" stroke="#e3b9ae" strokeWidth=".8"
      />
      {sectors.map((s, i) => <SectorBase key={i} s={s} />)}
      <path d="M183 585V575Q184 561 198 561H240" fill="none" stroke="#e3b9ae" strokeWidth="3" />
      <path d="M183 585V575Q184 561 198 561H240" fill="none" stroke="#fff6e9" strokeWidth="1.800" />
      <path d="M512 478v20M1050 435v40M1050 520v35M1050 585v42M875 667Q950 672 1038 674Q1049 673 1050 660" fill="none" stroke="#dba6a1" strokeWidth=".8" strokeDasharray="9 3" />
      <path d="M180 313.500H1919M180 716H1919" stroke="#edc9bd" strokeWidth="1" />
      <path d="M992 313Q1038 339 1114 339Q1185 337 1226 313z" fill="#000" stroke="#c33" strokeWidth=".5" />
      {sectors.map((s, i) => <SectorZones key={i} s={s} />)}
      <path d="M1184 318H1218Q1204 325 1185 330z" fill="#709a3c" />
      <path d="M1614 313h305v240h-305z" fill="#fff6e9" />
      <path d="M1614 318h40v23h-40zM1682 453h80v10h-80z" fill="#9dc66b" />
      <path d="M1614 453h40v10h-40z" fill="#c3b65d" />
      <path d="M1654 453h28v10h-28z" fill="#c7a452" />
      <path d="M1810 453h22v10h-22z" fill="#e2dfd8" />
      <path d="M1834 453h85v14h-85z" fill="#73e3c7" />
      <path d="M1914 316h5v71h-5z" fill="#a95cae" />
      <path d="M1914 387h5v80h-5z" fill="#73e3c7" />
      <path d="M1914 518h5v187h-5z" fill="#7b91c7" />
      <path d="M1779 452h15v2h-15z" fill="#2cf2dd" />

      <g opacity=".95">
        <path d="M495 534h5v48h-5z" fill="#e65b60" />
        <path d="M497.500 535v46" stroke="#ffaaa0" strokeWidth="1.500" strokeDasharray="2 1" />
        <path d="M502 534h24.500v47.500H502z" fill="#f29857" />
        <path d="M510 535.500h9v20h-9zM510 559.500h9v20h-9z" fill="#fff1df" />
        <path d="M512 537.500h5v4.500h-5zM512 549h5v4.500h-5zM512 561.500h5v4.500h-5zM512 573h5v4.500h-5zM512 545h5M512 569h5" fill="#f29857" stroke="#f29857" strokeWidth=".6" />
      </g>
      {gates.map(([x, y]) => <Gate key={`${x}-${y}`} x={x} y={y} />)}
      {sideGates.map(([x, y, f, a]) => <SideGate key={`${x}-${y}`} x={x} y={y} flip={f} angle={a} />)}
      {spots.map(([x, y, w, h, a]) => <Spot key={`${x}-${y}`} x={x} y={y} w={w} h={h} a={a} />)}
      <polygon points="524,640 536,644 532,660 518,656" fill="#62be83" opacity=".8" />
      {kiosks.map(([x, y]) => <Kiosk key={`${x}-${y}`} x={x} y={y} />)}
      <Elevator x={422} y={409} size={20} />
      <Elevator x={250} y={732} size={33} />

      {deviceMarks.map(d => (
        <g key={`${d.cx}-${d.cy}`}>
          <Glyph kind={d.kind} x={d.cx - d.r} y={d.cy - d.r} size={d.r * 2} color={d.color} opacity={d.r === 16 ? 0.88 : 1} />
          <text x={d.cx} y={d.ly} fontSize={d.fs} fontFamily="Noto Sans" textAnchor="middle" fill="#5c5c55" letterSpacing=".15">{d.label}</text>
        </g>
      ))}

      <g opacity=".68"><Glyph kind="sonic" x={931} y={651} size={58} color="#f27299" /></g>
      <text x="960" y="643" fontSize="13.800" fontWeight="600" fontFamily="Noto Sans" textAnchor="middle" fill="#80807c" style={{ textShadow: '2px 2px 2px rgba(0,0,0,.3)' }}>129-CSBTCQ1</text>
      <path d="M960 583V631M931 631.500H989V709.500H931z" fill="none" stroke="#e4d422" strokeWidth="1.400" />
      {handles.map(([x, y]) => <rect key={`${x}-${y}`} x={x - 8.300} y={y - 8.300} width="16.600" height="16.600" fill="#e4d41e" />)}
    </MapSvg>
  );
}

/* ---------- toolbar glyphs, drawn on a 28 x 28 field ---------- */
const padlock = <><rect x="2.500" y="1" width="23" height="25" rx="4" fill="none" stroke="#000" strokeWidth="2" /><path d="M7 13h14v7.500q0 2-2 2H9q-2 0-2-2z" /><path d="M10.500 13V8q0-2 2-2h3q2 0 2 2v5" fill="none" stroke="#000" strokeWidth="1.600" /></>;
const zoomPlus = <g fill="none" stroke="#000" strokeWidth="2.200"><circle cx="12.300" cy="11" r="8.800" /><path d="M18.500 17.500l6.800 7M7.500 11h9.600M12.300 6.200v9.600" /></g>;
const zoomMinus = <g fill="none" stroke="#000" strokeWidth="2.200"><circle cx="12.300" cy="11" r="8.800" /><path d="M18.500 17.500l6.800 7M7.500 11h9.600" /></g>;
const corners = <path d="M3 9.500V3h6.500M18.500 3H25v6.500M25 18.500V25h-6.500M9.500 25H3v-6.500" fill="none" stroke="#000" strokeWidth="2.400" />;
const fit = <>{corners}<path d="M8 8.500h12.500v10.500H8z" /></>;
const hand = <path d="M8.300 26.500L3.200 17q-.8-1.800.8-1.900 1.400 0 3.500 3L7 5.500q.1-1.500 1.400-1.500t1.500 1.500l.8 8h.5L11.500 2Q11.700.6 13 .6T14.500 2l.3 11.500h.5L16.200 3.300Q16.500 1.900 17.800 2T19.200 3.600l-.5 10.400h.5l1.500-7q.5-1.400 1.800-1.100t1.100 1.700L23.500 20l-2.500 6.500z" />;
const bin = <><path d="M3.500 4.500h7V2.800q0-1.300 1.300-1.300h4.400q1.300 0 1.300 1.300v1.700h7v2h-21z" /><path d="M5.800 6.500V23q0 2 2 2h12.400q2 0 2-2V6.500" fill="none" stroke="#000" strokeWidth="2.400" /><path d="M11.300 9v13.500M16.700 9v13.500" stroke="#000" strokeWidth="1.900" /></>;
const boardBin = <><path d="M12 21.500H1V1.500h19V7" fill="none" stroke="#000" strokeWidth="2.200" /><path d="M12.500 11h4.500q0-2 2-2h2.500q2 0 2 2H28v1.800H12.500z" /><path d="M14.500 12.500V24q0 1.700 1.700 1.700h8q1.700 0 1.700-1.700V12.500M18.400 14v10M22 14v10" fill="none" stroke="#000" strokeWidth="1.900" /></>;
const layersMinus = <g fill="none" stroke="#000" strokeWidth="2"><path d="M5 20.500H1V1h23v3.500" /><path d="M12.500 25H6V5.500h20.500V13" /><circle cx="21.500" cy="20.800" r="6" /><path d="M18.500 20.800h6" /></g>;
const gear = <g fill="none" stroke="#000" strokeWidth="2.200"><path d="M11.500 1.500h5l.8 3.500 2.700 1.300 3.300-1.500 3 4-2.200 2.600v4.400l2.200 2.600-3 4-3.300-1.500-2.700 1.300-.8 3.300h-5l-.8-3.300L8 20.900l-3.300 1.500-3-4 2.200-2.600v-4.400L1.700 8.800l3-4L8 6.300l2.700-1.300z" /><circle cx="14" cy="13.600" r="4.800" /></g>;
const tools = [zoomPlus, zoomMinus, fit, corners, hand, padlock, bin, boardBin, layersMinus, gear];

function Chevron({ up, w = 18, h = 11, color = '#fff', stroke = 1.6 }: { up?: boolean; w?: number; h?: number; color?: string; stroke?: number }) {
  return (
    <svg width={w} height={h} viewBox={`0 0 ${w} ${h}`} fill="none" stroke={color} strokeWidth={stroke}>
      <path d={up ? `M1 ${h - 1}L${w / 2} 1.500L${w - 1} ${h - 1}` : `M1 1L${w / 2} ${h - 1.500}L${w - 1} 1`} />
    </svg>
  );
}

const sidebarKinds: Kind[] = ['gate', 'camDash', 'cam', 'dome', 'reader', 'tree', 'video', 'dome2', 'kiosk', 'speaker', 'scan', 'lamp', 'sonic'];
const swatches = ['#000', '#4d4d4d', '#fff', '#f02828', '#f7a525', '#f8e71c', '#7ed321', '#50e3c2', '#4a90e2', '#bd10e0'];

export default function App() {
  return (
    <Page>
      <GlobalStyle />
      <TopNav>
        <NavItem $width={143}>首页</NavItem>
        <NavItem $width={144}>编辑地图</NavItem>
        <NavItem $width={144}>元素管理</NavItem>
        <NavItem $width={144}>图例管理</NavItem>
      </TopNav>
      <SubBar>
        <FloorSelect>B1<Chevron w={17} h={10} /></FloorSelect>
        <Segments>
          <Segment $width={116}>背景制作</Segment>
          <Segment $width={116} $active>内容制作</Segment>
          <Segment $width={80}>预览</Segment>
        </Segments>
        <Actions>
          <PrimaryButton $width={201} $height={33}>增量更新地图数据</PrimaryButton>
          <PrimaryButton $width={220} $height={33}>初始化上传地图数据</PrimaryButton>
        </Actions>
      </SubBar>
      <Main>
        <Sidebar>
          <TileGrid $pull={20}>
            <Tile><Bar $stroke="#3a9be0" $fill="#29485a" /></Tile>
            <Tile><Bar $stroke="#75696b" $fill="#3d4c4e" /></Tile>
            <Tile><Bar $stroke="#43c8b5" $fill="#2d4d50" /></Tile>
          </TileGrid>
          <SectionHead>设备<Chevron up w={13} h={9} stroke={2.2} /></SectionHead>
          <TileGrid>
            {sidebarKinds.map(k => <Tile key={k}><Glyph kind={k} /></Tile>)}
          </TileGrid>
          <SectionHead />
        </Sidebar>
        <ScrollTrack>
          <Arrow />
          <ScrollThumb />
          <Arrow $down />
        </ScrollTrack>
        <Canvas>
          <FloorMap />
          <Tools>
            <Toolbar>
              {tools.map((t, i) => (
                <ToolButton key={i}><svg width="28" height="28" viewBox="0 0 28 28" overflow="visible">{t}</svg></ToolButton>
              ))}
            </Toolbar>
            <Search>
              <SearchInput placeholder="请输入元素实体编号" />
              <SearchButton>
                <svg width="30" height="30" viewBox="0 0 30 30" fill="none" stroke="#f4f4f4" strokeWidth="2.300"><circle cx="12.500" cy="12.500" r="11" /><path d="M20.500 20.500l8.500 8.500" /></svg>
              </SearchButton>
            </Search>
          </Tools>
          <PanelColumn>
            <Panel $height={163}>
              <PanelHead $height={49}>
                <PanelTitle>属性</PanelTitle>
                <PrimaryButton $width={72} $height={34}>保存</PrimaryButton>
                <Chevron up w={17} h={11} />
              </PanelHead>
              <Row $top={12} $height={33}><Label>元素名称：</Label><Value>超声波探测器</Value></Row>
              <Row $top={16} $height={33}><Label>元素编号：</Label><Field $pad={13}>129-CSBTCQ1</Field></Row>
            </Panel>
            <Panel $height={352}>
              <PanelHead $height={48}><PanelTitle>元素样式</PanelTitle><Chevron up w={17} h={11} /></PanelHead>
              <Row $top={17} $height={33}>
                <Label>编号字体：</Label>
                <Field $pad={17}>16<svg width="8" height="8"><path d="M0 0h8L4 8z" /></svg></Field>
              </Row>
              <Row $top={20} $height={33}><Label>字体颜色：</Label><Chip />#4D4D4D</Row>
              <Palette>
                {swatches.map((c, i) => (
                  <Swatch key={c} $color={c}>
                    {i === 1 && <svg width="20" height="20"><circle cx="10" cy="10" r="9.700" fill="#24b50f" /><path d="M5 10l3.500 3.700L15 7" fill="none" stroke="#fff" strokeWidth="2.500" /></svg>}
                  </Swatch>
                ))}
              </Palette>
              <Row $top={16} $height={33}>
                <Label>编号位置：</Label>
                <Radio $on /><RadioText>上</RadioText><Radio /><RadioText>中</RadioText><Radio /><RadioText>下</RadioText>
              </Row>
              <Row $top={12} $height={33}><Label>编号翻转：</Label><Radio /></Row>
            </Panel>
          </PanelColumn>
        </Canvas>
      </Main>
    </Page>
  );
}
